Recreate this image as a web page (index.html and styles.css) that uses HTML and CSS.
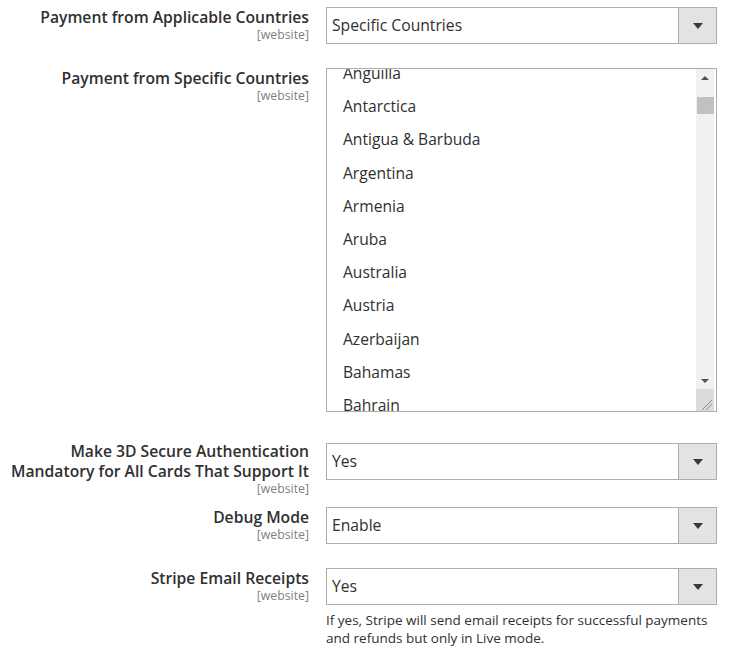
FILE: index.html
```html
<!DOCTYPE html>
<html lang="en">
<head>
  <meta charset="UTF-8">
  <meta name="viewport" content="width=device-width, initial-scale=1.0">
  <title>Stripe Payment Settings</title>
  <link rel="stylesheet" href="styles.css">
</head>
<body>

<div class="config">

  <div class="row">
    <div class="label">
      <span class="label-text">Payment from Applicable Countries</span>
      <span class="scope">[website]</span>
    </div>
    <div class="control">
      <div class="select">
        <span class="select-value">Specific Countries</span>
        <span class="select-arrow"></span>
      </div>
    </div>
  </div>

  <div class="row">
    <div class="label">
      <span class="label-text">Payment from Specific Countries</span>
      <span class="scope">[website]</span>
    </div>
    <div class="control">
      <div class="listbox">
        <div class="listbox-items">
          <div class="option">Anguilla</div>
          <div class="option">Antarctica</div>
          <div class="option">Antigua &amp; Barbuda</div>
          <div class="option">Argentina</div>
          <div class="option">Armenia</div>
          <div class="option">Aruba</div>
          <div class="option">Australia</div>
          <div class="option">Austria</div>
          <div class="option">Azerbaijan</div>
          <div class="option">Bahamas</div>
          <div class="option">Bahrain</div>
          <div class="option">Bangladesh</div>
        </div>
        <div class="scrollbar">
          <div class="scroll-track">
            <span class="scroll-up"></span>
            <span class="scroll-gap"></span>
            <span class="scroll-thumb"></span>
            <span class="scroll-space"></span>
            <span class="scroll-down"></span>
          </div>
          <div class="resizer">
            <svg width="18" height="22" viewBox="0 0 18 22">
              <line x1="6" y1="21" x2="16" y2="11" stroke="#8a8a8a" stroke-width="1"/>
              <line x1="10" y1="21" x2="16" y2="15" stroke="#8a8a8a" stroke-width="1"/>
            </svg>
          </div>
        </div>
      </div>
    </div>
  </div>

  <div class="row row-after-list">
    <div class="label label-raised">
      <span class="label-text">Make 3D Secure Authentication<br>Mandatory for All Cards That Support It</span>
      <span class="scope">[website]</span>
    </div>
    <div class="control">
      <div class="select">
        <span class="select-value">Yes</span>
        <span class="select-arrow"></span>
      </div>
    </div>
  </div>

  <div class="row row-tight">
    <div class="label">
      <span class="label-text">Debug Mode</span>
      <span class="scope">[website]</span>
    </div>
    <div class="control">
      <div class="select">
        <span class="select-value">Enable</span>
        <span class="select-arrow"></span>
      </div>
    </div>
  </div>

  <div class="row">
    <div class="label">
      <span class="label-text">Stripe Email Receipts</span>
      <span class="scope">[website]</span>
    </div>
    <div class="control">
      <div class="select">
        <span class="select-value">Yes</span>
        <span class="select-arrow"></span>
      </div>
      <p class="note">If yes, Stripe will send email receipts for successful payments and refunds but only in Live mode.</p>
    </div>
  </div>

</div>

</body>
</html>
```

FILE: styles.css
```css
body {
  font-family: "Open Sans", "Liberation Sans", sans-serif;
  margin: 0;
  padding: 0;
  background-color: #fff;
  color: #303030;
}
.config {
  padding-top: 7px;
}
.row {
  display: flex;
  align-items: flex-start;
  gap: 17px;
  margin-top: 24px;
}
.row:first-child {
  margin-top: 0;
}
.row.row-after-list {
  margin-top: 31px;
}
.row.row-tight {
  margin-top: 11px;
}
.label {
  width: 309px;
  flex-shrink: 0;
  display: flex;
  flex-direction: column;
  align-items: flex-end;
  text-align: right;
}
.label.label-raised {
  margin-top: -2px;
}
.label-text {
  font-size: 15.7px;
  font-weight: 600;
  line-height: 20px;
  color: #303030;
}
.scope {
  margin-top: 1px;
  font-size: 12.3px;
  line-height: 14px;
  color: #808080;
}
.control {
  width: 391px;
}
.select {
  display: flex;
  height: 37px;
  box-sizing: border-box;
  border: 1px solid #adadad;
  background-color: #fff;
}
.select-value {
  flex: 1;
  padding-left: 5px;
  font-size: 15.7px;
  line-height: 35px;
}
.select-arrow {
  width: 37px;
  border-left: 1px solid #adadad;
  background-color: #e3e3e3;
  display: flex;
  align-items: center;
  justify-content: center;
}
.select-arrow::after {
  content: "";
  border-left: 5px solid transparent;
  border-right: 5px solid transparent;
  border-top: 6px solid #41362f;
}
.listbox {
  display: flex;
  height: 344px;
  box-sizing: border-box;
  border: 1px solid #adadad;
  overflow: hidden;
}
.listbox-items {
  flex: 1;
  margin-top: -12px;
  padding-left: 16px;
}
.option {
  font-size: 15.6px;
  line-height: 33.2px;
  color: #303030;
}
.scrollbar {
  width: 20px;
  display: flex;
  flex-direction: column;
}
.scroll-track {
  flex: 1;
  display: flex;
  flex-direction: column;
  align-items: center;
  background-color: #f1f1f1;
  margin-right: 2px;
}
.scroll-up,
.scroll-down {
  height: 17px;
  display: flex;
  align-items: center;
  justify-content: center;
}
.scroll-up::after {
  content: "";
  border-left: 4px solid transparent;
  border-right: 4px solid transparent;
  border-bottom: 4px solid #505050;
}
.scroll-down::after {
  content: "";
  border-left: 4px solid transparent;
  border-right: 4px solid transparent;
  border-top: 4px solid #505050;
}
.scroll-gap {
  height: 11px;
}
.scroll-thumb {
  width: 17px;
  height: 17px;
  background-color: #c1c1c1;
}
.scroll-space {
  flex: 1;
}
.resizer {
  height: 22px;
  background-color: #dcdcdc;
  margin-right: 2px;
}
.resizer svg {
  display: block;
}
.note {
  margin: 6px 0 0;
  font-size: 13.5px;
  line-height: 18px;
  color: #303030;
}
```
